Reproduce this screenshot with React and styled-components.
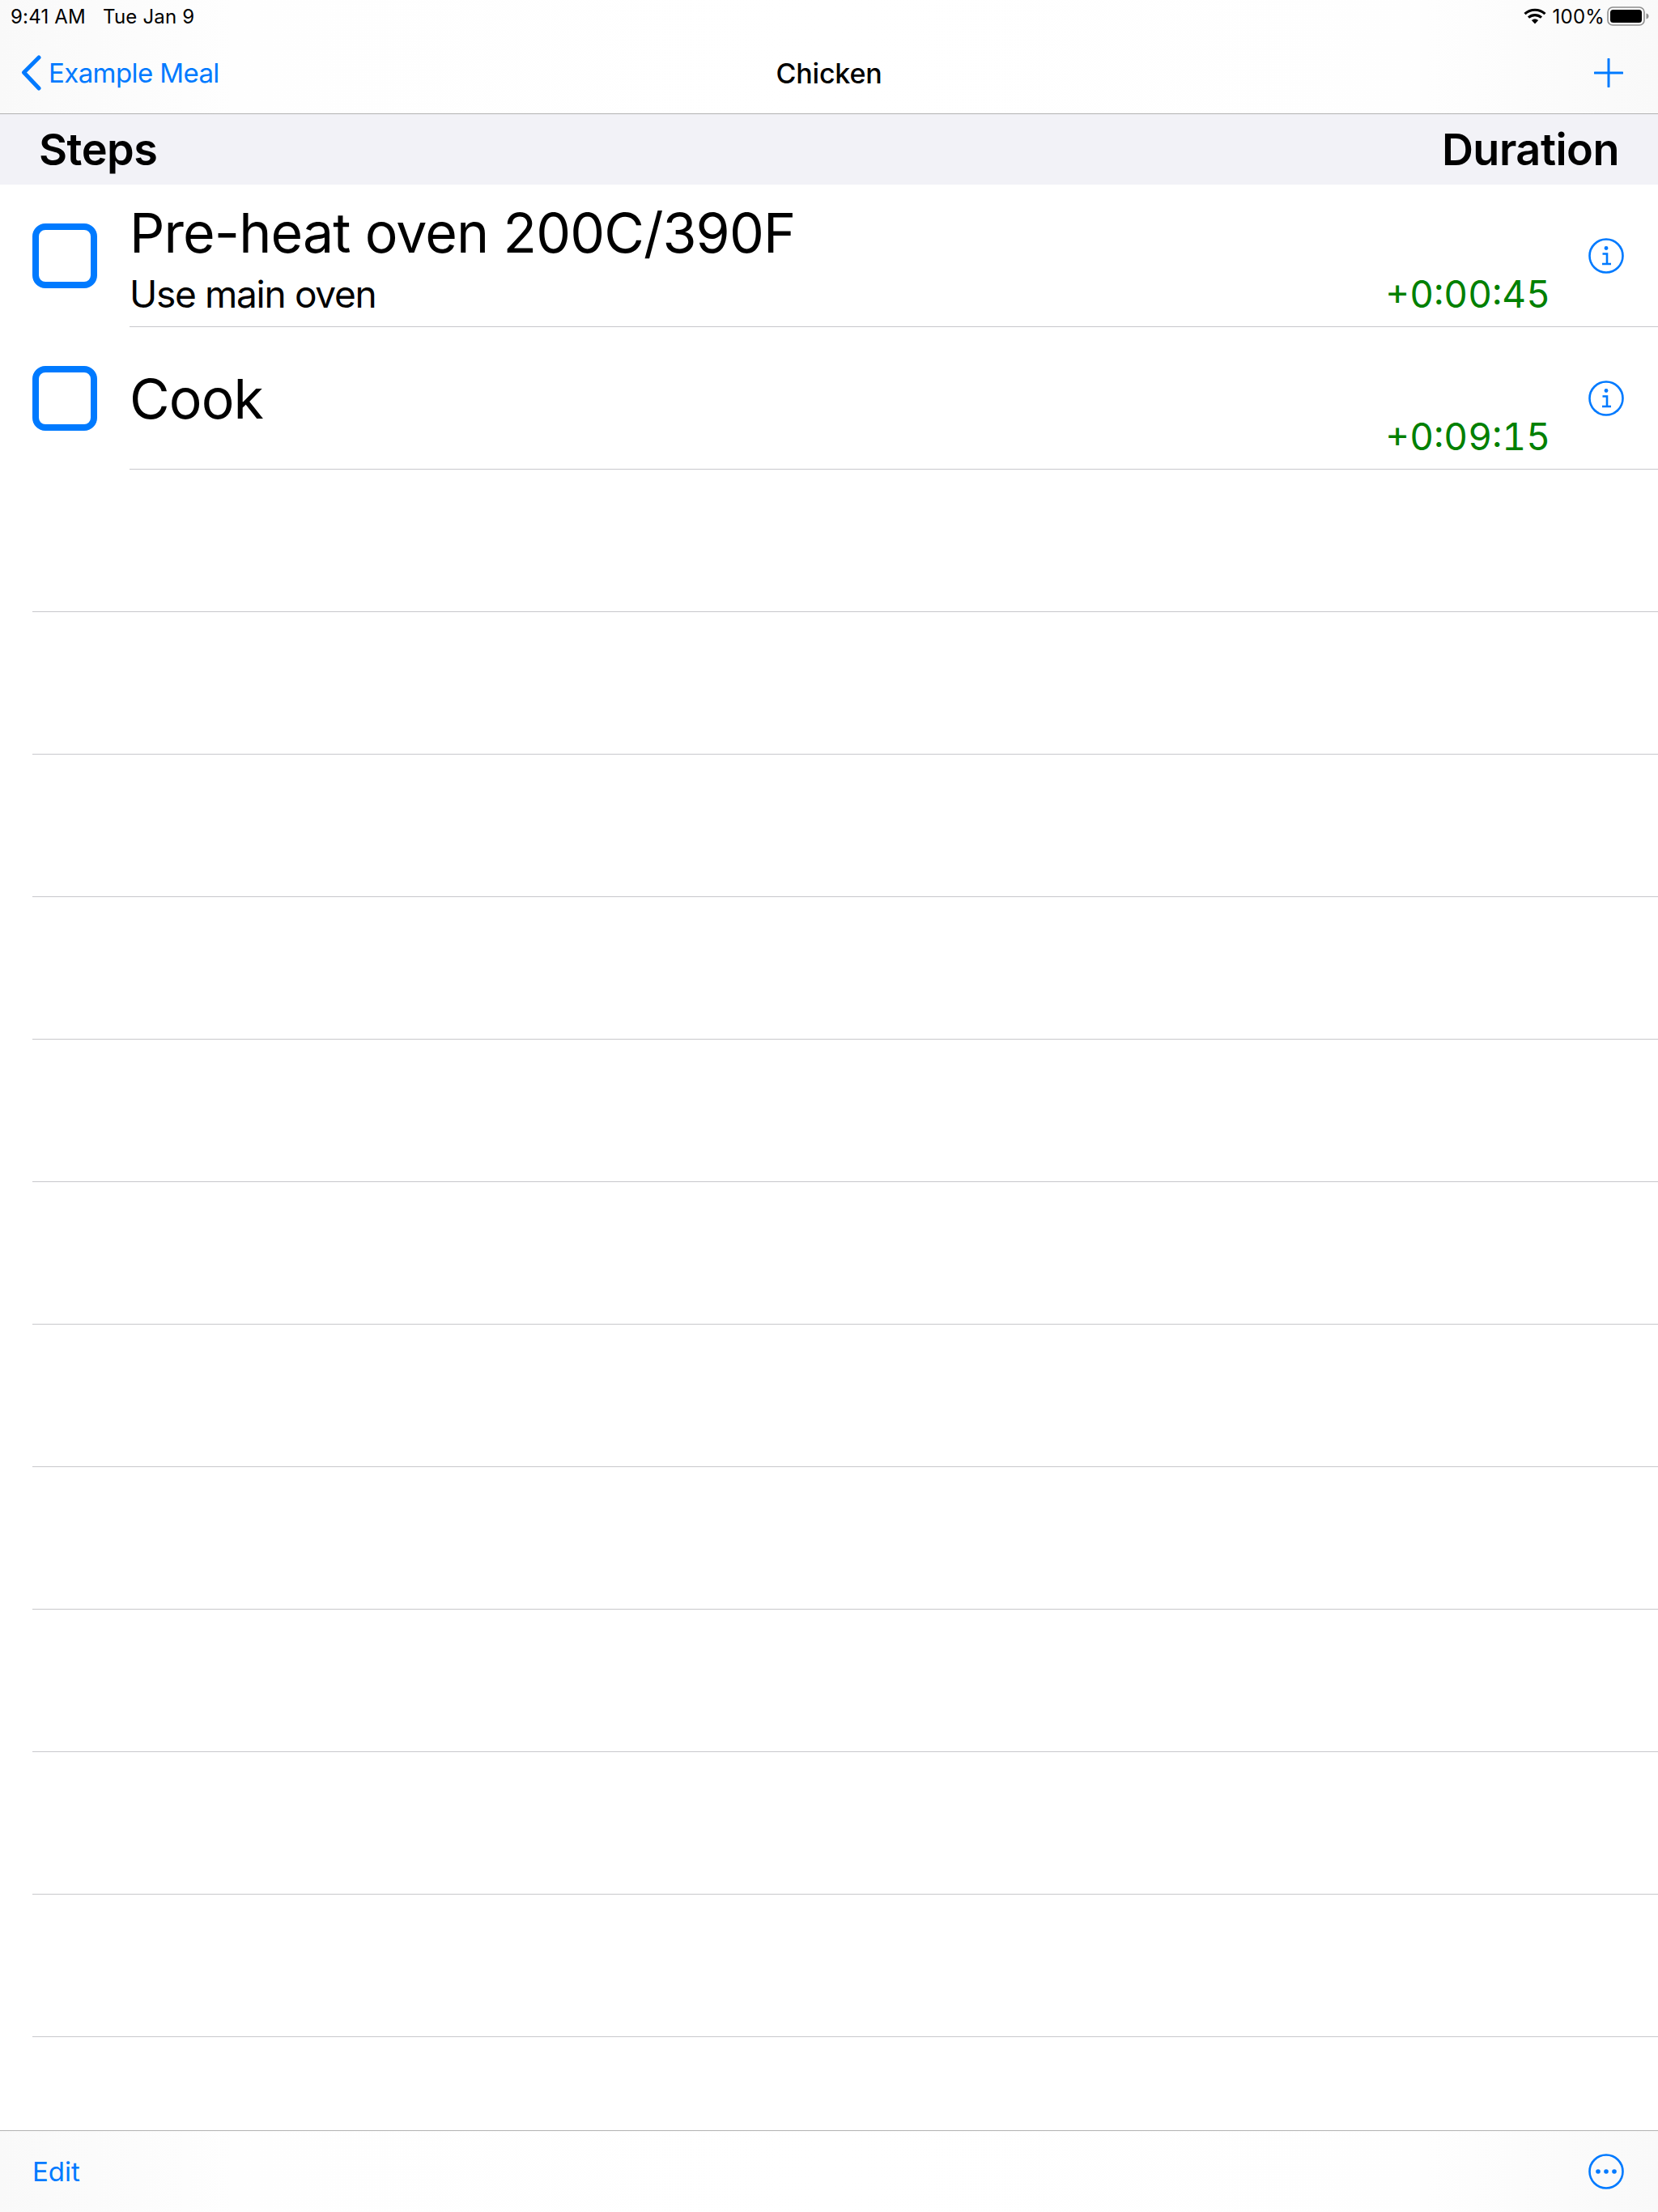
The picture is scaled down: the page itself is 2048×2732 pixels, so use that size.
import styled, { createGlobalStyle } from "styled-components";

const blue = "#007aff";

const steps = [
  { id: 1, title: "Pre-heat oven 200C/390F", note: "Use main oven", duration: "+0:00:45" },
  { id: 2, title: "Cook", duration: "+0:09:15" },
];

const blankRows = Array.from({ length: 11 }, (_, i) => i);

function App() {
  return (
    <Page>
      <GlobalStyle />
      <TopBars>
        <StatusBar>
          <StatusGroup>
            <span>9:41 AM</span>
            <span>Tue Jan 9</span>
          </StatusGroup>
          <StatusRight>
            <WifiIcon />
            <Percent>100%</Percent>
            <BatteryIcon />
          </StatusRight>
        </StatusBar>
        <NavBar>
          <BackLink>
            <BackIcon />
            Example Meal
          </BackLink>
          <NavTitle>Chicken</NavTitle>
          <AddButton>
            <PlusIcon />
          </AddButton>
        </NavBar>
      </TopBars>
      <SectionHeader>
        <span>Steps</span>
        <span>Duration</span>
      </SectionHeader>
      <List>
        {steps.map(step => (
          <Row key={step.id}>
            <Checkbox />
            <RowBody>
              <RowText>
                <Title>{step.title}</Title>
                {step.note && <Note>{step.note}</Note>}
              </RowText>
              <Duration>{step.duration}</Duration>
              <InfoIcon />
            </RowBody>
          </Row>
        ))}
        {blankRows.map(i => (
          <BlankRow key={i} />
        ))}
      </List>
      <Toolbar>
        <EditLink>Edit</EditLink>
        <MoreIcon />
      </Toolbar>
    </Page>
  );
}

export default App;

function WifiIcon() {
  return (
    <svg width="28" height="20" viewBox="0 0 28 20" fill="none">
      <path d="M1.5 7.2C8.6 0.6 19.4 0.6 26.5 7.2" stroke="#000" strokeWidth="3.2" />
      <path d="M6 11.6C10.6 7.6 17.4 7.6 22 11.6" stroke="#000" strokeWidth="3.2" />
      <path d="M9.8 15.1L14 19.6L18.2 15.1C15.8 13 12.2 13 9.8 15.1Z" fill="#000" />
    </svg>
  );
}

function BatteryIcon() {
  return (
    <svg width="52" height="24" viewBox="0 0 52 24" fill="none">
      <rect x="1" y="1" width="45" height="22" rx="6" stroke="#8e8e8e" strokeWidth="1.6" />
      <rect x="4" y="4" width="39" height="16" rx="3.5" fill="#000" />
      <path d="M48.5 8.5C50.5 9 51.5 10.2 51.5 12C51.5 13.8 50.5 15 48.5 15.5Z" fill="#8e8e8e" />
    </svg>
  );
}

function BackIcon() {
  return (
    <svg width="26" height="44" viewBox="0 0 26 44" fill="none">
      <path d="M22 3L3.5 21.5L22 41" stroke={blue} strokeWidth="5" strokeLinecap="round" strokeLinejoin="round" />
    </svg>
  );
}

function PlusIcon() {
  return (
    <svg width="36" height="36" viewBox="0 0 36 36" fill="none">
      <path d="M18 1V35M1 18H35" stroke={blue} strokeWidth="3" strokeLinecap="round" />
    </svg>
  );
}

function InfoIcon() {
  return (
    <InfoSvg width="44" height="44" viewBox="0 0 44 44" fill="none">
      <circle cx="22" cy="22" r="20.5" stroke={blue} strokeWidth="2.6" />
      <circle cx="22" cy="12.5" r="2.4" fill={blue} />
      <path d="M17.5 19.5H23V31.5M17 32H28" stroke={blue} strokeWidth="2.6" />
    </InfoSvg>
  );
}

function MoreIcon() {
  return (
    <svg width="44" height="44" viewBox="0 0 44 44" fill="none">
      <circle cx="22" cy="22" r="20.5" stroke={blue} strokeWidth="2.6" />
      <circle cx="12" cy="22" r="2.8" fill={blue} />
      <circle cx="22" cy="22" r="2.8" fill={blue} />
      <circle cx="32" cy="22" r="2.8" fill={blue} />
    </svg>
  );
}

const GlobalStyle = createGlobalStyle`
  html, body {
    margin: 0;
    padding: 0;
    background: #ffffff;
  }
`;

const Page = styled.div`
  box-sizing: border-box;
  display: flex;
  flex-direction: column;
  width: 2048px;
  height: 2732px;
  overflow: hidden;
  font-family: Inter, "Liberation Sans", sans-serif;
  color: #000000;
  background-color: #ffffff;
`;

const TopBars = styled.header`
  box-sizing: border-box;
  height: 141px;
  border-bottom: 1px solid #b2b2b2;
  background: linear-gradient(90deg, #f9f9f9 0, #fefefe 14%, #ffffff 50%, #fefefe 86%, #f9f9f9 100%);
`;

const StatusBar = styled.div`
  box-sizing: border-box;
  display: flex;
  align-items: center;
  justify-content: space-between;
  height: 40px;
  padding: 0 11px 0 13px;
  font-size: 24px;
  letter-spacing: 0.2px;
`;

const StatusGroup = styled.div`
  display: flex;
  gap: 21px;
`;

const StatusRight = styled.div`
  display: flex;
  align-items: center;
`;

const Percent = styled.span`
  margin: 0 3px 0 8px;
`;

const NavBar = styled.nav`
  box-sizing: border-box;
  display: grid;
  grid-template-columns: 1fr auto 1fr;
  align-items: center;
  height: 100px;
  padding: 0 26px;
`;

const BackLink = styled.div`
  display: flex;
  align-items: center;
  gap: 8px;
  font-size: 33px;
  letter-spacing: -0.6px;
  color: ${blue};
`;

const NavTitle = styled.div`
  font-size: 34px;
  font-weight: 500;
  letter-spacing: -0.2px;
`;

const AddButton = styled.div`
  display: flex;
  justify-content: flex-end;
  padding-right: 17px;
`;

const SectionHeader = styled.div`
  box-sizing: border-box;
  display: flex;
  align-items: center;
  justify-content: space-between;
  height: 87px;
  padding: 0 48px;
  font-size: 54px;
  font-weight: 600;
  letter-spacing: -0.5px;
  background-color: #f2f2f7;
`;

const List = styled.main`
  flex: 1;
`;

const Row = styled.div`
  display: flex;
  align-items: center;
  height: 176px;
  padding-left: 40px;
`;

const Checkbox = styled.div`
  box-sizing: border-box;
  flex: none;
  width: 80px;
  height: 80px;
  border: 8px solid ${blue};
  border-radius: 16px;
`;

const RowBody = styled.div`
  box-sizing: border-box;
  flex: 1;
  display: flex;
  align-items: center;
  height: 100%;
  margin-left: 40px;
  padding-right: 42px;
  border-bottom: 1px solid #c8c8cc;
`;

const RowText = styled.div`
  flex: 1;
  display: flex;
  flex-direction: column;
  justify-content: center;
`;

const Title = styled.div`
  font-size: 68px;
  line-height: 80px;
  letter-spacing: -0.9px;
`;

const Note = styled.div`
  margin: 7px 0 -7px;
  font-size: 46px;
  line-height: 58px;
  letter-spacing: -1.3px;
`;

const Duration = styled.div`
  align-self: flex-end;
  margin: 0 47px 12px 0;
  font-size: 46px;
  line-height: 56px;
  font-variant-numeric: tabular-nums;
  color: #008000;
`;

const InfoSvg = styled.svg`
  flex: none;
`;

const BlankRow = styled.div`
  box-sizing: border-box;
  height: 176px;
  margin-left: 40px;
  border-bottom: 1px solid #c8c8cc;
`;

const Toolbar = styled.footer`
  box-sizing: border-box;
  display: flex;
  align-items: center;
  justify-content: space-between;
  height: 101px;
  padding: 0 42px 0 40px;
  border-top: 1px solid #b2b2b2;
  font-size: 33px;
  background: linear-gradient(90deg, #f9f9f9 0, #fefefe 14%, #ffffff 50%, #fefefe 86%, #f9f9f9 100%);
`;

const EditLink = styled.div`
  color: ${blue};
`;
